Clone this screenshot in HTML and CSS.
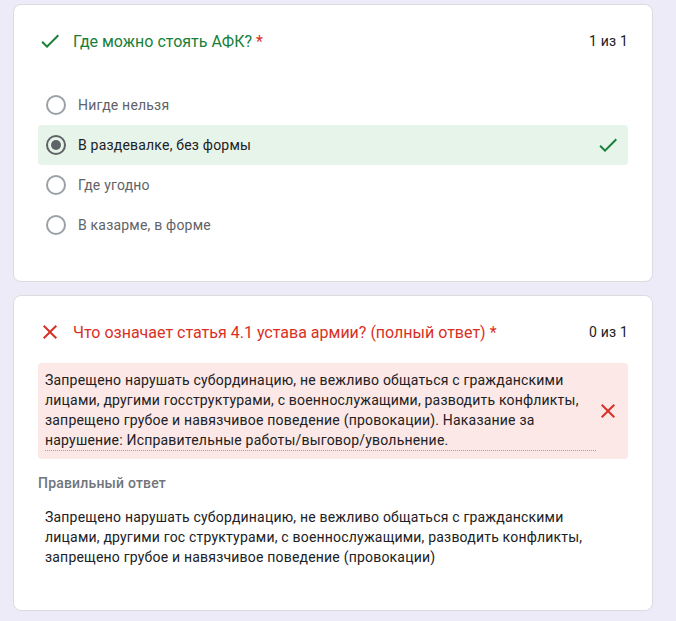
FILE: index.html
```html
<!DOCTYPE html>
<html lang="ru">
<head>
    <meta charset="UTF-8">
    <title>Результаты теста</title>
    <link rel="stylesheet" href="styles.css">
</head>
<body>
    <div class="page">

        <!-- Вопрос с выбором ответа -->
        <div class="card">
            <div class="card-head">
                <svg class="icon icon-ok" viewBox="0 0 24 24"><path d="M9 16.17L4.83 12l-1.42 1.41L9 19 21 7l-1.41-1.41z"/></svg>
                <div class="title title-ok">Где можно стоять АФК? <span class="req">*</span></div>
                <div class="score">1 из 1</div>
            </div>
            <div class="options">
                <div class="option">
                    <span class="radio"></span>
                    <span class="option-text">Нигде нельзя</span>
                </div>
                <div class="option option-right">
                    <span class="radio radio-on"></span>
                    <span class="option-text">В раздевалке, без формы</span>
                    <svg class="icon icon-ok" viewBox="0 0 24 24"><path d="M9 16.17L4.83 12l-1.42 1.41L9 19 21 7l-1.41-1.41z"/></svg>
                </div>
                <div class="option">
                    <span class="radio"></span>
                    <span class="option-text">Где угодно</span>
                </div>
                <div class="option">
                    <span class="radio"></span>
                    <span class="option-text">В казарме, в форме</span>
                </div>
            </div>
        </div>

        <!-- Вопрос с развёрнутым ответом -->
        <div class="card card-text">
            <div class="card-head">
                <svg class="icon icon-bad" viewBox="0 0 24 24"><path d="M19 6.41L17.59 5 12 10.59 6.41 5 5 6.41 10.59 12 5 17.59 6.41 19 12 13.41 17.59 19 19 17.59 13.41 12z"/></svg>
                <div class="title title-bad">Что означает статья 4.1 устава армии? (полный ответ) <span class="req">*</span></div>
                <div class="score">0 из 1</div>
            </div>
            <div class="answer-wrong">
                <div class="answer-text">Запрещено нарушать субординацию, не вежливо общаться с гражданскими лицами, другими госструктурами, с военнослужащими, разводить конфликты, запрещено грубое и навязчивое поведение (провокации). Наказание за нарушение: Исправительные работы/выговор/увольнение.</div>
                <svg class="icon icon-bad" viewBox="0 0 24 24"><path d="M19 6.41L17.59 5 12 10.59 6.41 5 5 6.41 10.59 12 5 17.59 6.41 19 12 13.41 17.59 19 19 17.59 13.41 12z"/></svg>
            </div>
            <div class="label">Правильный ответ</div>
            <div class="correct-text">Запрещено нарушать субординацию, не вежливо общаться с гражданскими лицами, другими гос структурами, с военнослужащими, разводить конфликты, запрещено грубое и навязчивое поведение (провокации)</div>
        </div>

    </div>
</body>
</html>
```

FILE: styles.css
```css
body {
    margin: 0;
    background-color: #edebf8;
    font-family: Roboto, "Liberation Sans", Arial, sans-serif;
    color: #202124;
}
.page {
    width: 640px;
    padding: 4px 0 0 13px;
    display: flex;
    flex-direction: column;
    gap: 13px;
}
.card {
    background-color: #fff;
    border: 1px solid #dadce0;
    border-radius: 8px;
    padding: 24px 24px 36px 24px;
}
.card-text {
    padding-bottom: 43px;
}
.card-head {
    display: flex;
    align-items: center;
    height: 24px;
}
.icon {
    width: 24px;
    height: 24px;
    flex-shrink: 0;
}
.icon-ok {
    fill: #188038;
}
.icon-bad {
    fill: #d93025;
}
.title {
    flex: 1;
    margin-left: 11px;
    font-size: 16px;
}
.title-ok {
    color: #188038;
}
.title-bad {
    color: #d93025;
}
.req {
    color: #d93025;
}
.score {
    font-size: 14px;
    letter-spacing: 0.2px;
}
.options {
    margin-top: 32px;
}
.option {
    display: flex;
    align-items: center;
    height: 40px;
    padding: 0 8px;
    border-radius: 4px;
    font-size: 14px;
    letter-spacing: 0.2px;
    color: #5f6368;
}
.option-right {
    background-color: #e6f4ea;
    color: #202124;
}
.option-right .icon {
    margin-left: auto;
}
.radio {
    width: 16px;
    height: 16px;
    border: 2px solid #9aa0a6;
    border-radius: 50%;
    margin-right: 12px;
    display: flex;
    align-items: center;
    justify-content: center;
}
.radio-on {
    border-color: #5f6368;
}
.radio-on::after {
    content: "";
    width: 10px;
    height: 10px;
    border-radius: 50%;
    background-color: #5f6368;
}
.answer-wrong {
    display: flex;
    align-items: center;
    margin-top: 19px;
    padding: 7px 8px 8px 7px;
    background-color: #fce8e6;
    border-radius: 4px;
}
.answer-text {
    width: 551px;
    font-size: 14px;
    line-height: 20px;
    letter-spacing: 0.2px;
    border-bottom: 1px dotted #9aa0a6;
}
.label {
    margin-top: 14px;
    font-size: 14px;
    font-weight: 500;
    line-height: 20px;
    letter-spacing: 0.2px;
    color: #70757a;
}
.correct-text {
    width: 551px;
    margin-top: 14px;
    padding-left: 7px;
    font-size: 14px;
    line-height: 20px;
    letter-spacing: 0.2px;
}
```
